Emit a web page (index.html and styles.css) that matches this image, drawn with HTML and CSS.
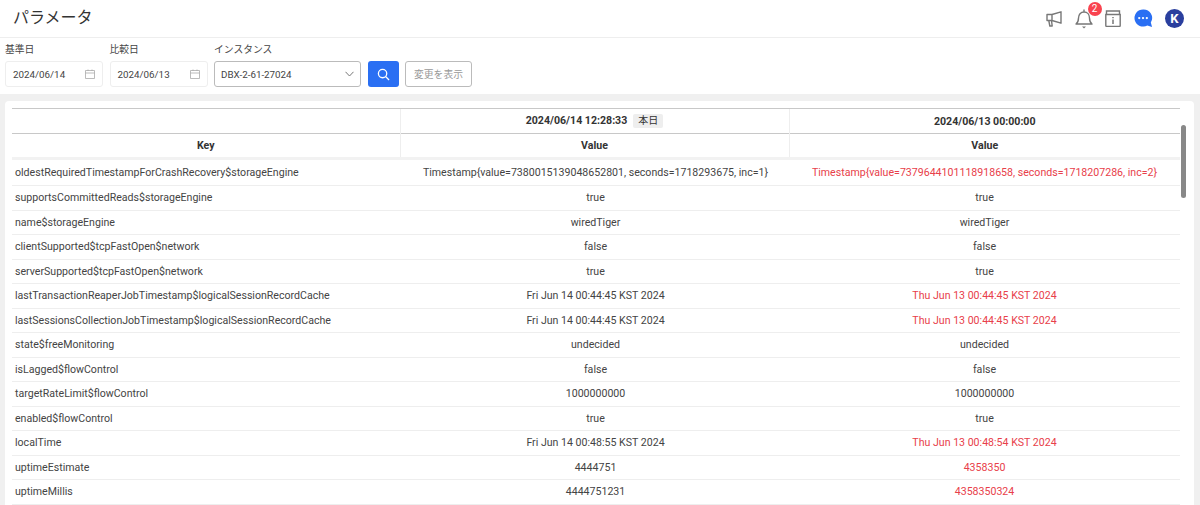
FILE: index.html
```html
<!DOCTYPE html>
<html lang="ja">
<head>
    <meta charset="UTF-8">
    <title>パラメータ</title>
    <link rel="stylesheet" href="styles.css">
</head>
<body>
    <header class="topbar">
        <h1 class="page-title">パラメータ</h1>
        <div class="top-icons">
            <svg class="icon" width="16" height="16" viewBox="0 0 16 16"><path d="M1 3.500h5L15 .8v11.400L6 9.500H1zM6 3.500v6M2.800 9.500l1 5.500h2.400L5.500 9.500" fill="none" stroke="#777" stroke-width="1.400" stroke-linejoin="round"/></svg>
            <div class="bell">
                <svg class="icon" width="18" height="20" viewBox="0 0 18 20"><path d="M1 15c1.800-1.300 2.500-3 2.500-6 0-3.500 2.200-6 5.500-6s5.500 2.500 5.500 6c0 3 .7 4.700 2.500 6zM9 1v2" fill="none" stroke="#777" stroke-width="1.400" stroke-linejoin="round" stroke-linecap="round"/><path d="M7 17.500h4L9 19.500z" fill="#777"/></svg>
                <span class="badge">2</span>
            </div>
            <svg class="icon" width="16" height="17" viewBox="0 0 16 17"><path d="M1.500 4V1h13v3M.8 4.500h14.400v11a1 1 0 0 1-1 1H1.800a1 1 0 0 1-1-1z" fill="none" stroke="#777" stroke-width="1.400"/><path d="M8 7v1.300M8 9.500V14" stroke="#777" stroke-width="1.500"/></svg>
            <svg class="icon" width="19" height="19" viewBox="0 0 20 20"><path d="M9.500 .5a9 9 0 1 0 4.500 16.800L19 19l-1.300-4.800A9 9 0 0 0 9.500 .5z" fill="#2a6ff3"/><circle cx="5.500" cy="9.500" r="1.200" fill="#fff"/><circle cx="9.500" cy="9.500" r="1.200" fill="#fff"/><circle cx="13.500" cy="9.500" r="1.200" fill="#fff"/></svg>
            <div class="avatar">K</div>
        </div>
    </header>

    <section class="filters">
        <div class="field">
            <label>基準日</label>
            <div class="date-box">
                <span>2024/06/14</span>
                <svg width="10" height="10" viewBox="0 0 10 10"><path d="M.5 1.500h9v8h-9zM.5 4h9M3 .5v1.500M7 .5v1.500" fill="none" stroke="#aaa" stroke-width=".8"/></svg>
            </div>
        </div>
        <div class="field">
            <label>比較日</label>
            <div class="date-box">
                <span>2024/06/13</span>
                <svg width="10" height="10" viewBox="0 0 10 10"><path d="M.5 1.500h9v8h-9zM.5 4h9M3 .5v1.500M7 .5v1.500" fill="none" stroke="#aaa" stroke-width=".8"/></svg>
            </div>
        </div>
        <div class="field">
            <label>インスタンス</label>
            <div class="select-box">
                <span>DBX-2-61-27024</span>
                <svg width="9" height="6" viewBox="0 0 9 6"><path d="M.5 .8l4 4.200 4-4.200" fill="none" stroke="#777" stroke-width="1"/></svg>
            </div>
        </div>
        <button class="search-btn" type="button">
            <svg width="13" height="13" viewBox="0 0 14 14"><circle cx="6" cy="6" r="4.500" fill="none" stroke="#fff" stroke-width="1.400"/><path d="M9.500 9.500L13 13" stroke="#fff" stroke-width="1.400"/></svg>
        </button>
        <button class="diff-btn" type="button">変更を表示</button>
    </section>

    <main class="content">
        <div class="card">
            <table class="param-table">
                <colgroup>
                    <col class="col-key">
                    <col class="col-val">
                    <col>
                </colgroup>
                <thead>
                    <tr>
                        <th></th>
                        <th>2024/06/14 12:28:33<span class="today">本日</span></th>
                        <th>2024/06/13 00:00:00</th>
                    </tr>
                    <tr class="head-second">
                        <th>Key</th>
                        <th>Value</th>
                        <th>Value</th>
                    </tr>
                </thead>
                <tbody>
                    <tr><td>oldestRequiredTimestampForCrashRecovery$storageEngine</td><td>Timestamp{value=7380015139048652801, seconds=1718293675, inc=1}</td><td class="diff">Timestamp{value=7379644101118918658, seconds=1718207286, inc=2}</td></tr>
                    <tr><td>supportsCommittedReads$storageEngine</td><td>true</td><td>true</td></tr>
                    <tr><td>name$storageEngine</td><td>wiredTiger</td><td>wiredTiger</td></tr>
                    <tr><td>clientSupported$tcpFastOpen$network</td><td>false</td><td>false</td></tr>
                    <tr><td>serverSupported$tcpFastOpen$network</td><td>true</td><td>true</td></tr>
                    <tr><td>lastTransactionReaperJobTimestamp$logicalSessionRecordCache</td><td>Fri Jun 14 00:44:45 KST 2024</td><td class="diff">Thu Jun 13 00:44:45 KST 2024</td></tr>
                    <tr><td>lastSessionsCollectionJobTimestamp$logicalSessionRecordCache</td><td>Fri Jun 14 00:44:45 KST 2024</td><td class="diff">Thu Jun 13 00:44:45 KST 2024</td></tr>
                    <tr><td>state$freeMonitoring</td><td>undecided</td><td>undecided</td></tr>
                    <tr><td>isLagged$flowControl</td><td>false</td><td>false</td></tr>
                    <tr><td>targetRateLimit$flowControl</td><td>1000000000</td><td>1000000000</td></tr>
                    <tr><td>enabled$flowControl</td><td>true</td><td>true</td></tr>
                    <tr><td>localTime</td><td>Fri Jun 14 00:48:55 KST 2024</td><td class="diff">Thu Jun 13 00:48:54 KST 2024</td></tr>
                    <tr><td>uptimeEstimate</td><td>4444751</td><td class="diff">4358350</td></tr>
                    <tr><td>uptimeMillis</td><td>4444751231</td><td class="diff">4358350324</td></tr>
                </tbody>
            </table>
            <div class="scroll-thumb"></div>
        </div>
    </main>
</body>
</html>
```

FILE: styles.css
```css
* {
    box-sizing: border-box;
}

html, body {
    height: 100%;
}

body {
    margin: 0;
    overflow: hidden;
    background-color: #f0f0f0;
    color: #444;
    font-family: Roboto, "Noto Sans CJK JP", sans-serif;
    font-size: 10.600px;
}

.topbar {
    display: flex;
    align-items: center;
    justify-content: space-between;
    height: 38px;
    padding: 0 16px 0 13px;
    background-color: #fff;
    border-bottom: 1px solid #eee;
}

.page-title {
    margin: 0 0 5px;
    font-size: 16px;
    font-weight: 400;
    color: #333;
}

.top-icons {
    display: flex;
    align-items: center;
    gap: 12.500px;
}

.icon {
    display: block;
}

.bell {
    position: relative;
}

.badge {
    position: absolute;
    top: -7px;
    right: -9px;
    width: 14px;
    height: 14px;
    border-radius: 50%;
    background-color: #f9434f;
    color: #fff;
    font-size: 10px;
    line-height: 14px;
    text-align: center;
}

.avatar {
    width: 19px;
    height: 19px;
    border-radius: 50%;
    background-color: #2a3f9e;
    color: #fff;
    font-size: 13px;
    font-weight: 700;
    line-height: 19px;
    text-align: center;
}

.filters {
    display: flex;
    align-items: flex-end;
    gap: 6.500px;
    height: 56px;
    padding: 0 5px 7px;
    background-color: #fff;
}

.field label {
    display: block;
    margin-bottom: 3px;
    font-size: 9.800px;
    line-height: 16px;
}

.date-box {
    display: flex;
    align-items: center;
    justify-content: space-between;
    width: 98px;
    height: 26px;
    padding: 0 7px;
    border: 1px solid #eee;
    border-radius: 3px;
    font-size: 9.800px;
}

.select-box {
    display: flex;
    align-items: center;
    justify-content: space-between;
    width: 147px;
    height: 26px;
    padding: 0 6px;
    border: 1px solid #bbb;
    border-radius: 3px;
    font-size: 9.800px;
}

.search-btn {
    display: flex;
    align-items: center;
    justify-content: center;
    width: 31px;
    height: 26px;
    padding: 0;
    border: 0;
    border-radius: 3px;
    background-color: #2a6ff3;
}

.diff-btn {
    width: 67px;
    height: 26px;
    padding: 0;
    border: 1px solid #bbb;
    border-radius: 3px;
    background-color: #fff;
    color: #999;
    font-family: inherit;
    font-size: 9.800px;
}

.content {
    padding: 7px 6px 0 5px;
}

.card {
    position: relative;
    height: 420px;
    padding: 7px 9px 0 7px;
    border-radius: 4px;
    background-color: #fff;
    overflow: hidden;
}

.param-table {
    width: 1168px;
    table-layout: fixed;
    border-collapse: collapse;
}

.col-key {
    width: 388px;
}

.col-val {
    width: 389px;
}

.param-table th {
    height: 25px;
    padding: 0;
    border-top: 1px solid #c8c8c8;
    border-left: 1px solid #eee;
    font-size: 10.600px;
    font-weight: 700;
    color: #333;
    text-align: center;
}

.param-table th:first-child {
    border-left: 0;
}

.head-second th {
    border-bottom: 1px solid #ddd;
}

.param-table tbody tr:first-child td {
    height: 27px;
    border-top: 3px solid #f2f2f2;
}

.param-table td {
    height: 24.500px;
    padding: 0 3px;
    border-bottom: 1px solid #eee;
    text-align: center;
    white-space: nowrap;
    overflow: hidden;
}

.param-table td:first-child {
    text-align: left;
}

.param-table td:nth-child(2) {
    padding-left: 5px;
}

.param-table td.diff {
    color: #e8404a;
}

.today {
    display: inline-block;
    margin-left: 6px;
    padding: 0 5px;
    border-radius: 2px;
    background-color: #eee;
    font-size: 10px;
    font-weight: 400;
    line-height: 14px;
}

.scroll-thumb {
    position: absolute;
    top: 24px;
    right: 8px;
    width: 5px;
    height: 73px;
    border-radius: 3px;
    background-color: #888;
}
```
